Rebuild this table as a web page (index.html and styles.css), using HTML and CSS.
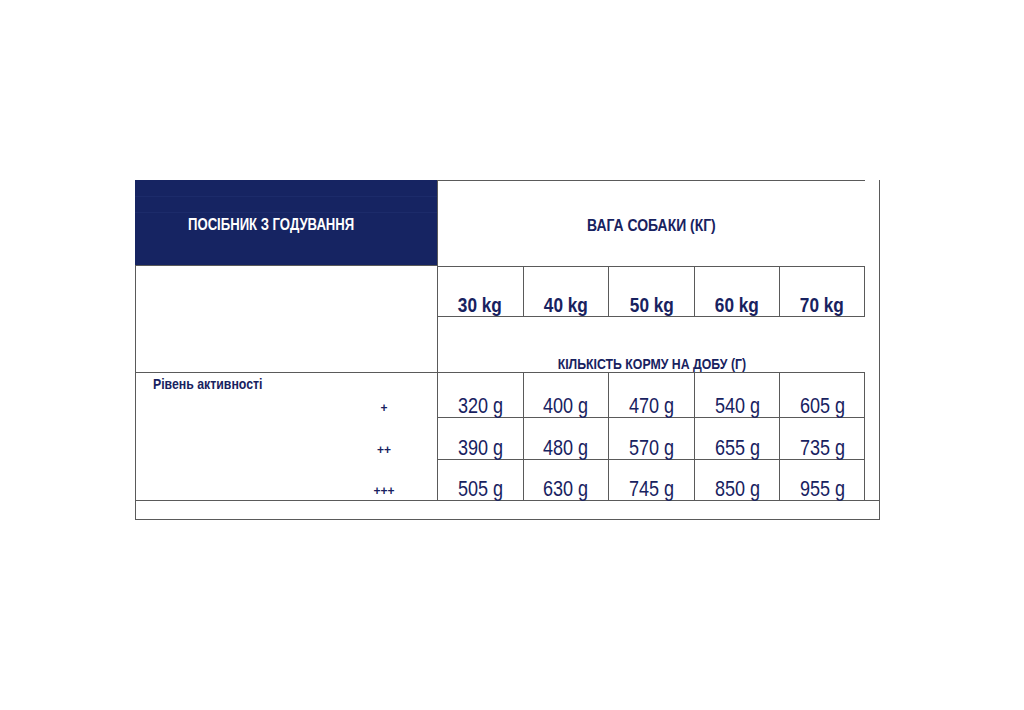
FILE: index.html
```html
<!DOCTYPE html>
<html lang="uk">
<head>
<meta charset="utf-8">
<title>Посібник з годування</title>
<link rel="stylesheet" href="styles.css">
</head>
<body>
<div class="page">
  <div class="sheet">
    <div class="title-cell"><span class="n title">ПОСІБНИК З ГОДУВАННЯ</span></div>
    <div class="weight-head"><span class="n">ВАГА СОБАКИ (КГ)</span></div>
    <div class="right-edge"></div>

    <div class="blank-left"></div>
    <div class="wcell c2"><span class="n">30 kg</span></div>
    <div class="wcell c3"><span class="n">40 kg</span></div>
    <div class="wcell c4"><span class="n">50 kg</span></div>
    <div class="wcell c5"><span class="n">60 kg</span></div>
    <div class="wcell c6 last"><span class="n">70 kg</span></div>

    <div class="amount-head"><span class="n">КІЛЬКІСТЬ КОРМУ НА ДОБУ (Г)</span></div>

    <div class="act r4">
      <span class="act-label">Рівень активності</span>
      <span class="plus">+</span>
    </div>
    <div class="dcell r4 c2"><span class="n">320 g</span></div>
    <div class="dcell r4 c3"><span class="n">400 g</span></div>
    <div class="dcell r4 c4"><span class="n">470 g</span></div>
    <div class="dcell r4 c5"><span class="n">540 g</span></div>
    <div class="dcell r4 c6 last"><span class="n">605 g</span></div>

    <div class="act r5"><span class="plus">++</span></div>
    <div class="dcell r5 c2"><span class="n">390 g</span></div>
    <div class="dcell r5 c3"><span class="n">480 g</span></div>
    <div class="dcell r5 c4"><span class="n">570 g</span></div>
    <div class="dcell r5 c5"><span class="n">655 g</span></div>
    <div class="dcell r5 c6 last"><span class="n">735 g</span></div>

    <div class="act r6"><span class="plus">+++</span></div>
    <div class="dcell r6 c2"><span class="n">505 g</span></div>
    <div class="dcell r6 c3"><span class="n">630 g</span></div>
    <div class="dcell r6 c4"><span class="n">745 g</span></div>
    <div class="dcell r6 c5"><span class="n">850 g</span></div>
    <div class="dcell r6 c6 last"><span class="n">955 g</span></div>

    <div class="foot"></div>
  </div>
</div>
</body>
</html>
```

FILE: styles.css
```css
html, body {
  margin: 0;
  padding: 0;
  background: #ffffff;
}

.page {
  padding: 180px 0 0 135px;
  font-family: "Liberation Sans", Arial, sans-serif;
  color: #18225f;
}

/* condensed look of Arial Narrow */
.n {
  display: inline-block;
  white-space: nowrap;
  transform: scaleX(0.82);
  transform-origin: center center;
}

.sheet {
  display: grid;
  grid-template-columns: 302px repeat(5, 85.6px) 15px;
  grid-template-rows: 86px 50px 56px 45px 42px 41px 20px;
  width: 745px;
}

.sheet > div {
  box-sizing: border-box;
  border-color: #5a5a5a;
  border-style: solid;
  border-width: 0;
}

.title-cell {
  grid-column: 1;
  grid-row: 1;
  background: #162462;
  background-image:
    linear-gradient(#1c2b6a, #1c2b6a),
    linear-gradient(#1c2b6a, #1c2b6a);
  background-size: 100% 1px, 100% 1px;
  background-position: 0 16px, 0 32px;
  background-repeat: no-repeat;
  border-bottom-width: 1px !important;
  display: flex;
  align-items: center;
  padding-left: 53px;
  padding-top: 5px;
}

.title {
  color: #ffffff;
  font-weight: bold;
  font-size: 16px;
  transform-origin: left center;
}

.weight-head {
  grid-column: 2 / 7;
  grid-row: 1;
  border-top-width: 1px !important;
  border-left-width: 1px !important;
  display: flex;
  align-items: center;
  justify-content: center;
  padding-top: 5px;
  font-weight: bold;
  font-size: 17px;
}

.right-edge {
  grid-column: 7;
  grid-row: 1 / 7;
  border-right-width: 1px !important;
}

.blank-left {
  grid-column: 1;
  grid-row: 2 / 4;
  border-left-width: 1px !important;
}

.wcell {
  grid-row: 2;
  border-top-width: 1px !important;
  border-left-width: 1px !important;
  display: flex;
  align-items: flex-end;
  justify-content: center;
  padding-bottom: 1px;
  font-weight: bold;
  font-size: 21px;
  line-height: 1;
}

.c2 { grid-column: 2; }
.c3 { grid-column: 3; }
.c4 { grid-column: 4; }
.c5 { grid-column: 5; }
.c6 { grid-column: 6; }

.last { border-right-width: 1px !important; }

.amount-head {
  grid-column: 2 / 7;
  grid-row: 3;
  border-top-width: 1px !important;
  border-left-width: 1px !important;
  display: flex;
  align-items: flex-end;
  justify-content: center;
  padding-bottom: 1px;
  font-weight: bold;
  font-size: 15px;
  line-height: 1;
}

.r4 { grid-row: 4; }
.r5 { grid-row: 5; }
.r6 { grid-row: 6; }

.act {
  grid-column: 1;
  border-left-width: 1px !important;
  display: flex;
  flex-direction: column;
  justify-content: flex-end;
  padding-bottom: 3px;
}

.act.r4 {
  border-top-width: 1px !important;
  justify-content: space-between;
  padding-top: 3px;
}

.act-label {
  align-self: flex-start;
  font-weight: bold;
  font-size: 15px;
  margin-left: 17px;
  transform: scaleX(0.82);
  transform-origin: left center;
  white-space: nowrap;
  line-height: 1;
}

.plus {
  width: 40px;
  margin-left: 228px;
  text-align: center;
  font-weight: bold;
  font-size: 12px;
  line-height: 1;
}

.dcell {
  border-top-width: 1px !important;
  border-left-width: 1px !important;
  display: flex;
  align-items: flex-end;
  justify-content: center;
  padding-bottom: 0;
  font-size: 22px;
  line-height: 1;
}

.foot {
  grid-column: 1 / 8;
  grid-row: 7;
  border-width: 1px !important;
}
```
